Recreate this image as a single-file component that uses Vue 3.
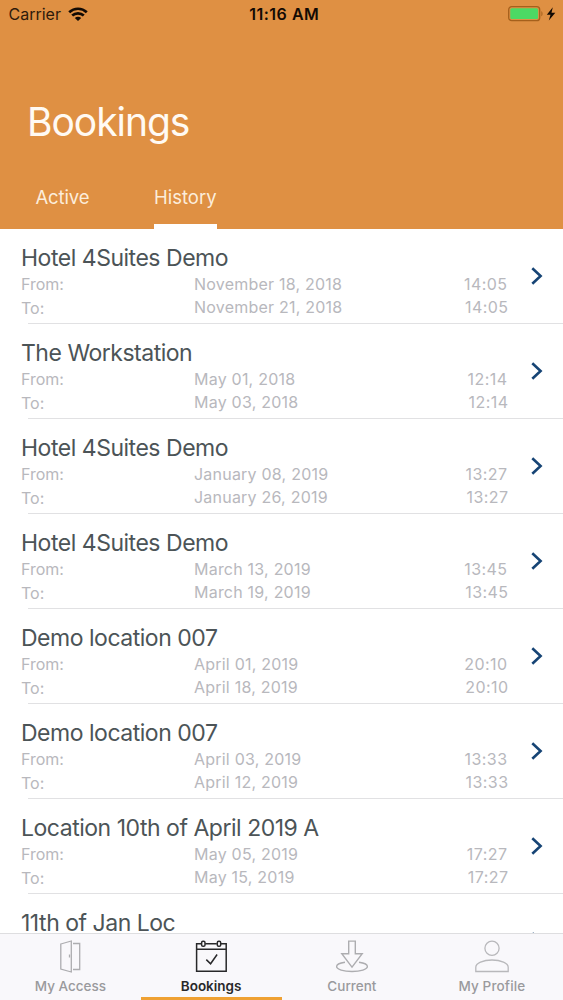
<template>
  <div class="app">
    <header class="header">
      <div class="status-bar">
        <div class="carrier">
          <span>Carrier</span>
          <svg class="wifi" width="20" height="14" viewBox="0 0 20 14" fill="none" stroke="#120a04" stroke-width="2.7">
            <path d="M1.2 5.2C6.2.6 13.8.6 18.8 5.2" />
            <path d="M4.2 8.6c3.3-3 8.3-3 11.6 0" />
            <path d="M10 13.9 6.8 10.9c1.8-1.5 4.6-1.5 6.4 0z" fill="#120a04" stroke="none" />
          </svg>
        </div>
        <span class="clock">11:16 AM</span>
        <div class="power">
          <svg width="48" height="16" viewBox="0 0 48 16">
            <rect x=".7" y=".7" width="31" height="14" rx="3" fill="none" stroke="#a5601c" stroke-width="1.3" />
            <rect x="2.3" y="2.3" width="27.8" height="10.8" rx="1.5" fill="#4cd964" />
            <path d="M33.4 5.2c1.5.6 1.5 4.4 0 5z" fill="#a5601c" />
            <path d="M44.8 1.3 38.8 8.7h3.7L40.8 14.4l6.5-7.6h-3.8z" fill="#120a04" />
          </svg>
        </div>
      </div>
      <h1>Bookings</h1>
      <nav class="tabs">
        <button class="tab tab-active">Active</button>
        <button class="tab tab-history selected">History</button>
      </nav>
    </header>

    <main class="list">
      <article v-for="(booking, i) in bookings" :key="i" class="booking">
        <div class="details">
          <h2>{{ booking.name }}</h2>
          <template v-if="booking.time">
            <div class="line">
              <span class="label">From:</span>
              <span class="date">{{ booking.from }}</span>
              <span class="time">{{ booking.time }}</span>
            </div>
            <div class="line to">
              <span class="label">To:</span>
              <span class="date">{{ booking.to }}</span>
              <span class="time">{{ booking.time }}</span>
            </div>
          </template>
        </div>
        <svg class="chevron" width="12" height="18" viewBox="0 0 12 18" fill="none" stroke="#164475" stroke-width="2.6">
          <path d="M1.3 1.3 9.6 9l-8.3 7.7" />
        </svg>
      </article>
    </main>

    <footer class="tab-bar">
      <button class="item">
        <svg width="34" height="34" viewBox="0 0 34 34" fill="none" stroke="#adadb0" stroke-width="1.3">
          <path d="M7.8 4 18.3 1v31L7.8 29z" />
          <path d="M20 3.5h6.7v26H20M16.5 14.5v3" />
        </svg>
        <span>My Access</span>
      </button>
      <button class="item current">
        <svg width="34" height="34" viewBox="0 0 34 34" fill="none" stroke="#28282a" stroke-width="1.5">
          <path d="M7.5 3.8H2.6v27.5h29.6V3.8h-5.5M11.2 3.8h11.6M2.6 9.3h29.6" />
          <rect x="7.6" y="1.3" width="3.4" height="5" rx="1.4" />
          <rect x="23.3" y="1.3" width="3.4" height="5" rx="1.4" />
          <path d="m12.3 19.6 4.3 4.2 6.5-9.3" />
        </svg>
        <span>Bookings</span>
      </button>
      <button class="item">
        <svg width="34" height="34" viewBox="0 0 34 34" fill="none" stroke="#adadb0" stroke-width="1.4">
          <path d="M13.7 1.1h6.6v12.6h6.9L17 27.2 6.8 13.7h6.9z" />
          <path d="M10 22.3C5 23 1.6 24.6 1.6 26.5c0 2.8 6.9 5 15.4 5s15.4-2.2 15.4-5c0-1.9-3.4-3.5-8.4-4.2" />
        </svg>
        <span>Current</span>
      </button>
      <button class="item profile">
        <svg width="34" height="34" viewBox="0 0 34 34" fill="none" stroke="#b8b8bb" stroke-width="1.3">
          <circle cx="17" cy="8.3" r="7.1" />
          <path d="M.8 31.5v-4.2c0-4 7.2-7.3 16.2-7.3s16.2 3.3 16.2 7.3v4.2z" />
        </svg>
        <span>My Profile</span>
      </button>
    </footer>
  </div>
</template>

<script setup>
const bookings = [
  { name: 'Hotel 4Suites Demo', from: 'November 18, 2018', to: 'November 21, 2018', time: '14:05' },
  { name: 'The Workstation', from: 'May 01, 2018', to: 'May 03, 2018', time: '12:14' },
  { name: 'Hotel 4Suites Demo', from: 'January 08, 2019', to: 'January 26, 2019', time: '13:27' },
  { name: 'Hotel 4Suites Demo', from: 'March 13, 2019', to: 'March 19, 2019', time: '13:45' },
  { name: 'Demo location 007', from: 'April 01, 2019', to: 'April 18, 2019', time: '20:10' },
  { name: 'Demo location 007', from: 'April 03, 2019', to: 'April 12, 2019', time: '13:33' },
  { name: 'Location 10th of April 2019 A', from: 'May 05, 2019', to: 'May 15, 2019', time: '17:27' },
  { name: '11th of Jan Loc' }
]
</script>

<style>
body {
  margin: 0;
  overflow: hidden;
}
</style>

<style scoped>
.app {
  display: flex;
  flex-direction: column;
  height: 1000px;
  overflow: hidden;
  background: #fff;
  font-family: Inter, "Liberation Sans", sans-serif;
}

button {
  padding: 0;
  border: 0;
  background: none;
  font-family: inherit;
}

.header {
  display: flex;
  flex-direction: column;
  flex: none;
  box-sizing: border-box;
  height: 228.5px;
  background: #df9043;
}

.status-bar {
  display: grid;
  grid-template-columns: 1fr auto 1fr;
  align-items: center;
  height: 29px;
  padding: 0 7px 0 8.5px;
  font-size: 16px;
  color: #120a04;
}

.carrier {
  display: flex;
  align-items: center;
  gap: 7px;
  margin-top: -1px;
  color: #2e1b0b;
}

.wifi {
  margin-top: -1px;
}

.clock {
  margin: -1px -4px 0 0;
  font-weight: 600;
  letter-spacing: 0.5px;
}

.power {
  display: flex;
  justify-content: flex-end;
  margin-top: -1px;
}

h1 {
  margin: 69px 0 0 27px;
  font-size: 39px;
  line-height: 48px;
  font-weight: 400;
  letter-spacing: -1.05px;
  color: #fffaf3;
}

.tabs {
  display: flex;
  margin-top: auto;
  padding-left: 35.5px;
}

.tab {
  box-sizing: border-box;
  height: 44px;
  padding-bottom: 13px;
  border-bottom: 5.5px solid transparent;
  font-size: 18.5px;
  line-height: 25px;
  color: #fceddb;
  text-align: left;
}

.tab-active {
  width: 118.5px;
  letter-spacing: -0.15px;
}

.tab-history {
  width: 63px;
}

.selected {
  border-color: #fff;
}

.list {
  flex: 1;
  min-height: 0;
  overflow: hidden;
}

.booking {
  position: relative;
  display: flex;
  align-items: flex-start;
  box-sizing: border-box;
  height: 95px;
  padding: 14.5px 20px 0 21px;
}

.booking::after {
  content: "";
  position: absolute;
  right: 0;
  bottom: 0;
  left: 28px;
  height: 1px;
  background: #e1e1e3;
}

.details {
  width: 487px;
}

h2 {
  margin: 0;
  font-size: 23px;
  line-height: 30px;
  font-weight: 400;
  letter-spacing: -0.48px;
  color: #4c5457;
  white-space: nowrap;
}

.line {
  display: grid;
  grid-template-columns: 173px 1fr auto;
  height: 23px;
  padding-right: 1px;
  font-size: 16px;
  line-height: 23px;
  color: #b8b8bd;
}

.to {
  padding-right: 0;
}

.to .label {
  line-height: 25px;
}

.date {
  letter-spacing: 0.22px;
}

.time {
  margin-right: -0.5px;
  letter-spacing: 0.45px;
}

.chevron {
  margin: 23.5px 0 0 23px;
}

.tab-bar {
  display: grid;
  grid-template-columns: repeat(4, 1fr);
  flex: none;
  box-sizing: border-box;
  height: 67.5px;
  border-top: 1.5px solid #dedee0;
  background: #f9f8fb;
}

.item {
  display: flex;
  flex-direction: column;
  align-items: center;
  padding-top: 6px;
  font-size: 13.5px;
  line-height: 18px;
  font-weight: 500;
  color: #9a9a9d;
}

.item span {
  margin-top: 3px;
}

.profile {
  padding-right: 1.5px;
  letter-spacing: 0.15px;
}

.current {
  color: #28282a;
  font-weight: 600;
  border-bottom: 3.5px solid #efa133;
}
</style>
